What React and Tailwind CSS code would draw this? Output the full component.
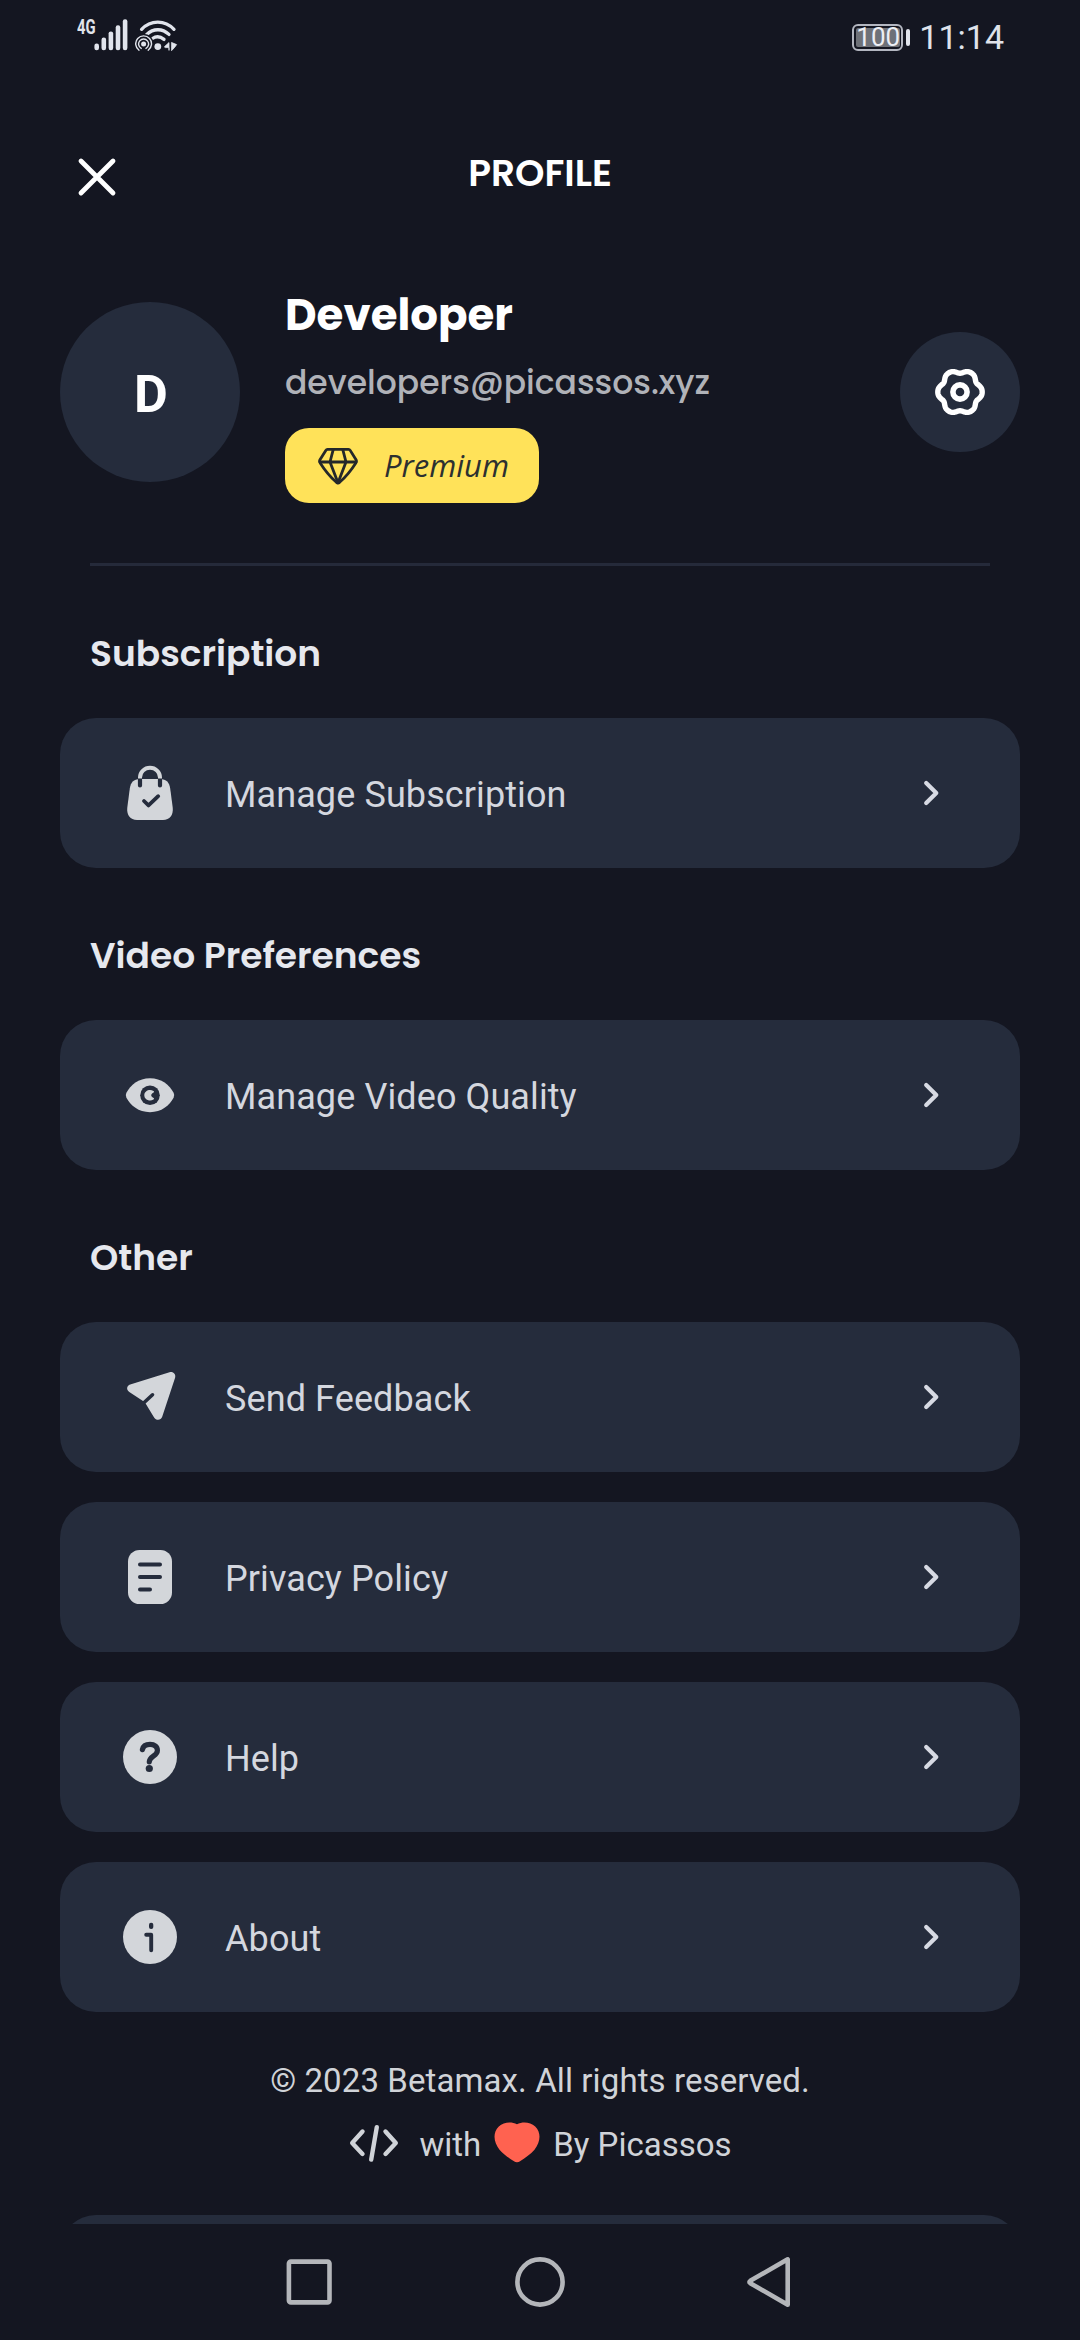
const CARD = "#252c3c";
const LIGHT = "#d3d6da";

function SignalIcon() {
  return (
    <svg width="36" height="36" viewBox="0 0 36 36" fill="#e1e4ec">
      <rect x="0.4" y="25.6" width="4.6" height="6.6" rx="2.2" />
      <rect x="7.5" y="19.6" width="4.6" height="12.6" rx="2.2" />
      <rect x="14.6" y="13.4" width="4.6" height="18.8" rx="2.2" />
      <rect x="21.7" y="7.2" width="4.6" height="25" rx="2.2" />
      <rect x="28.8" y="1.2" width="4.6" height="31" rx="2.2" />
    </svg>
  );
}

function WifiIcon() {
  return (
    <svg width="44" height="36" viewBox="0 0 44 36" fill="none" stroke="#e1e4ec" strokeLinecap="round">
      <path d="M6.6 11.3C15.5 1.6 30 1.6 39 11.3" strokeWidth="3.3" />
      <path d="M11.5 16.6C18.5 10 27.5 10.3 34 16.4" strokeWidth="3.3" />
      <path d="M17.5 20.5C21.5 17.8 25.5 18.6 29 21.4" strokeWidth="3.3" />
      <circle cx="22.8" cy="28.6" r="3.4" fill="#e1e4ec" stroke="none" />
      <circle cx="8.6" cy="26" r="10.2" fill="#141621" stroke="none" />
      <circle cx="8.6" cy="26" r="2.5" fill="#e1e4ec" stroke="none" />
      <path d="M6.2 30.4a5 5 0 1 1 4.8 0M4 32.2a7.9 7.9 0 1 1 9.2 0" strokeWidth="1.4" />
      <path d="M29.6 28.6L34 24.6V32.4V29.6H30.5ZM36.8 24.6L41.6 26.6L39.6 29.4L36.8 32.4Z" fill="#e1e4ec" strokeWidth="0.8" />
    </svg>
  );
}

function BatteryIcon() {
  return (
    <div className="flex items-center gap-[3px]">
      <div className="flex h-[27px] w-[51px] rounded-[6px] border-2 border-[#b3b6c0] p-[2px]">
        <div className="flex flex-1 items-center justify-center rounded-[2px] bg-[#6e7178] text-[26px] leading-none text-[#eceef4]">
          100
        </div>
      </div>
      <div className="h-[17px] w-[4px] rounded-[2px] bg-[#e1e4ec]" />
    </div>
  );
}

function CloseIcon() {
  return (
    <svg width="44" height="44" viewBox="0 0 44 44" fill="none" stroke="#fff" strokeWidth="4.8" strokeLinecap="round">
      <path d="M6 6L38 38M38 6L6 38" />
    </svg>
  );
}

// Closed outline whose radius swells six times round the circle.
const gearPath =
  Array.from({ length: 120 }, (_, i) => {
    const a = (i / 120) * Math.PI * 2;
    const c = Math.cos(6 * a);
    const r = 20.7 + 1.75 * c - 0.25 * Math.cos(12 * a);
    return `${i ? "L" : "M"}${(30 + r * Math.cos(a)).toFixed(2)} ${(30 + r * Math.sin(a)).toFixed(2)}`;
  }).join("") + "Z";

function GearIcon() {
  return (
    <svg width="60" height="60" viewBox="0 0 60 60" fill="none" stroke="#fff" strokeLinejoin="round">
      <path d={gearPath} strokeWidth="5.4" />
      <circle cx="30" cy="30" r="7.1" strokeWidth="5.6" />
    </svg>
  );
}

function DiamondIcon() {
  return (
    <svg width="44" height="40" viewBox="0 0 44 40" fill="none" stroke="#24282a" strokeWidth="2.8" strokeLinejoin="round" strokeLinecap="round">
      <path d="M11.5 3.4H32.5Q33.6 3.4 34.2 4.4L40.2 14Q41 15.4 40 16.7Q32.5 28.5 23.6 36.3Q22 37.6 20.4 36.3Q11.5 28.5 4 16.7Q3 15.4 3.8 14L9.8 4.4Q10.4 3.4 11.5 3.4Z" />
      <path d="M3.8 16H40.2M17.2 3.6L14 16L22 36.8L30 16L26.8 3.6" />
    </svg>
  );
}

function BagIcon() {
  return (
    <svg width="60" height="60" viewBox="0 0 60 60" fill="none" strokeLinecap="round">
      <path d="M20 16H40C46.500 16 49.400 19.600 50.200 25.500L52.700 44.500C53.600 52 49.800 57 43 57H17C10.200 57 6.400 52 7.300 44.500L9.800 25.500C10.600 19.600 13.500 16 20 16Z" fill={LIGHT} />
      <path d="M20 16.500V22.500M40 16.500V22.500" stroke={CARD} strokeWidth="4.200" />
      <path d="M20 15.500V14.500A10 9.700 0 0 1 40 14.500V15.500" stroke={LIGHT} strokeWidth="4" strokeLinecap="butt" />
      <path d="M24 38L28.500 42.400L38.200 33.200" stroke={CARD} strokeWidth="3.800" strokeLinejoin="round" />
    </svg>
  );
}

function EyeIcon() {
  return (
    <svg width="60" height="60" viewBox="0 0 60 60">
      <path d="M30 13.300C41.500 13.300 49.500 20 53.600 27.800Q54.900 30.300 53.600 32.800C49.500 40.500 41.500 47.200 30 47.200C18.500 47.200 10.500 40.500 6.400 32.800Q5.100 30.300 6.400 27.800C10.500 20 18.500 13.300 30 13.300Z" fill={LIGHT} />
      <circle cx="30" cy="30.300" r="9.800" fill={CARD} />
      <path d="M33.500 26C29.500 23.700 24.300 26 24.300 30.300C24.300 34.600 29.500 37 33.500 34.600C34.800 33.700 33.600 32.700 32.400 32.300C30.800 31.400 30.800 29.200 32.400 28.300C33.600 27.700 34.800 26.800 33.500 26Z" fill={LIGHT} />
    </svg>
  );
}

function SendIcon() {
  return (
    <svg width="60" height="60" viewBox="0 1.500 60 60" fill="none">
      <path d="M49.500 6.700C53 5.700 56.200 8.600 55.100 12.200L42.200 51.300C41 55 36.200 55.400 34.100 52L25.900 38.400Q24.700 36.400 23 35.500L9.300 26.400C6.100 24.200 6.500 20.200 10.200 18.900Z" fill={LIGHT} />
      <path d="M22.500 38.500L32.500 29.300" stroke={CARD} strokeWidth="3.600" strokeLinecap="round" />
    </svg>
  );
}

function DocumentIcon() {
  return (
    <svg width="60" height="60" viewBox="0 0 60 60" fill="none">
      <rect x="8" y="3" width="44" height="54" rx="11.500" fill={LIGHT} />
      <path d="M20 17.400H40M20 30H40M20 42.500H30" stroke={CARD} strokeWidth="4" strokeLinecap="round" />
    </svg>
  );
}

function HelpIcon() {
  return (
    <svg width="60" height="60" viewBox="0 0 60 60" fill="none">
      <circle cx="30" cy="30" r="27" fill={LIGHT} />
      <path d="M22.400 22.600C23.200 18.800 26 17.400 30 17.400C34.600 17.400 37.400 19.700 37.400 23.500C37.400 29 29.400 29.400 29.300 34.800" stroke={CARD} strokeWidth="5.200" strokeLinecap="round" />
      <circle cx="29.300" cy="41.500" r="3.600" fill={CARD} />
    </svg>
  );
}

function InfoIcon() {
  return (
    <svg width="60" height="60" viewBox="0 0 60 60" fill="none">
      <circle cx="30" cy="30" r="27" fill={LIGHT} />
      <rect x="29" y="15.800" width="4.300" height="6.200" rx="2" fill={CARD} />
      <path d="M26.200 27.700H31.200V43.200" stroke={CARD} strokeWidth="3.900" strokeLinecap="round" strokeLinejoin="round" />
    </svg>
  );
}

function ChevronIcon() {
  return (
    <svg width="36" height="36" viewBox="0 0 36 36" fill="none" stroke="#d7dae3" strokeWidth="4.200" strokeLinecap="round" strokeLinejoin="round">
      <path d="M13.200 8L23.300 18L13.200 28" />
    </svg>
  );
}

function CodeIcon() {
  return (
    <svg width="52" height="44" viewBox="0 0 52 44" fill="none" stroke="#d0d3d8" strokeWidth="4.400" strokeLinecap="round" strokeLinejoin="round">
      <path d="M14.500 8.500L4.200 20L14.500 31M37.500 8.500L47.800 20L37.500 31M28.800 4.200L23.200 36.600" />
    </svg>
  );
}

function HeartIcon() {
  return (
    <svg width="46" height="41" viewBox="0 0 46 46" preserveAspectRatio="none" fill="#ff6250">
      <path d="M23 2.600C28.500 -0.500 36.300 0 41.200 5C47.500 12 46.500 23 40.500 31C36.500 36 31.500 40 26.400 43.800Q23 46.500 19.600 43.800C14.500 40 9.500 36 5.500 31C-0.500 23 -1.500 12 4.800 5C9.700 0 17.500 -0.500 23 2.600Z" />
    </svg>
  );
}

function Row({ icon, label }) {
  return (
    <button className="flex h-[150px] w-full shrink-0 items-center rounded-[36px] bg-[#252c3c] pr-[71px] pl-[60px] text-left">
      {icon}
      <span className="ml-[45px] flex-1 pt-[3px] text-[36px] leading-[44px] tracking-[0.1px] text-[#d4d7df]">{label}</span>
      <ChevronIcon />
    </button>
  );
}

function Section({ title, rows }) {
  return (
    <section className="flex shrink-0 flex-col">
      <h2 className="h-[152px] px-[30px] pt-[61px] font-['Poppins','Inter',sans-serif] text-[36px] leading-[54px] font-semibold text-[#e6e8ee]">
        {title}
      </h2>
      <div className="flex flex-col gap-[30px]">
        {rows.map(([label, icon]) => (
          <Row key={label} label={label} icon={icon} />
        ))}
      </div>
    </section>
  );
}

export default function App() {
  return (
    <div className="flex h-[2340px] w-[1080px] flex-col overflow-hidden bg-[#141621] font-['Roboto',sans-serif]">
      <div className="flex h-[72px] shrink-0 items-center justify-between pr-[76px] pl-[77px]">
        <div className="flex items-center">
          <span className="flex h-[36px] w-[17px] items-start">
            <span className="-mt-[2px] origin-left scale-x-[0.74] text-[20px] leading-[22px] font-bold text-[#e1e4ec]">4G</span>
          </span>
          <SignalIcon />
          <span className="ml-[5px] flex"><WifiIcon /></span>
        </div>
        <div className="flex items-center pt-[2px]">
          <BatteryIcon />
          <span className="ml-[9px] text-[34px] leading-[40px] text-[#dfe2ea]">11:14</span>
        </div>
      </div>

      <header className="mt-[48px] grid h-[106px] shrink-0 grid-cols-[1fr_auto_1fr] items-center px-[75px]">
        <button className="flex pt-[8px]"><CloseIcon /></button>
        <h1 className="font-['Poppins','Inter',sans-serif] text-[37.5px] leading-[54px] font-semibold text-white">PROFILE</h1>
      </header>

      <main className="flex h-[1998px] shrink-0 flex-col overflow-hidden px-[60px] pt-[63px]">
        <div className="flex h-[214px] shrink-0 items-start">
          <div className="mt-[13px] flex size-[180px] items-center justify-center rounded-full bg-[#252c3c] pt-[5px] pl-[2px] text-[52px] leading-[60px] font-bold text-white">
            D
          </div>
          <div className="ml-[45px] flex flex-1 flex-col items-start font-['Poppins','Inter',sans-serif]">
            <div className="text-[43.5px] leading-[52px] font-bold text-white">Developer</div>
            <div className="mt-[19px] text-[33px] leading-[46px] font-medium text-[#b0b2b8]">developers@picassos.xyz</div>
            <div className="mt-[22px] flex h-[75px] w-[254px] items-center rounded-[24px] bg-[#ffe259] pl-[31px]">
              <DiamondIcon />
              <span className="ml-[24px] pb-[2px] font-['Open_Sans','Noto_Sans',sans-serif] text-[31px] leading-[42px] text-[#2c3030] italic">Premium</span>
            </div>
          </div>
          <button className="mt-[43px] flex size-[120px] items-center justify-center rounded-full bg-[#252c3c]">
            <GearIcon />
          </button>
        </div>

        <div className="mx-[30px] mt-[60px] h-[3px] shrink-0 bg-[#252a3a]" />

        <Section title="Subscription" rows={[["Manage Subscription", <BagIcon />]]} />
        <Section title="Video Preferences" rows={[["Manage Video Quality", <EyeIcon />]]} />
        <Section
          title="Other"
          rows={[
            ["Send Feedback", <SendIcon />],
            ["Privacy Policy", <DocumentIcon />],
            ["Help", <HelpIcon />],
            ["About", <InfoIcon />],
          ]}
        />

        <footer className="mt-[47px] flex shrink-0 flex-col items-center text-[33px] leading-[44px] text-[#d0d3d8]">
          <p className="tracking-[0.1px]">© 2023 Betamax. All rights reserved.</p>
          <div className="mt-[19px] flex h-[45px] items-center">
            <CodeIcon />
            <span className="ml-[19px]">with</span>
            <span className="mr-[13px] ml-[13px] flex pb-[4px]"><HeartIcon /></span>
            <span>By Picassos</span>
          </div>
        </footer>

        <div className="mt-[48px] h-[150px] shrink-0 rounded-[36px] bg-[#252c3c]" />
      </main>

      <nav className="flex h-[116px] shrink-0 items-center justify-center gap-[170px]">
        <svg width="60" height="60" viewBox="0 0 60 60" fill="none" stroke="#b4b6ba" strokeWidth="4.600">
          <rect x="8.900" y="9.600" width="40.600" height="40.800" rx="2" />
        </svg>
        <svg width="60" height="60" viewBox="0 0 60 60" fill="none" stroke="#b4b6ba" strokeWidth="4.600">
          <circle cx="30" cy="30" r="22.600" />
        </svg>
        <svg width="60" height="60" viewBox="0 0 60 60" fill="none" stroke="#b4b6ba" strokeWidth="4.600" strokeLinejoin="round">
          <path d="M10.300 28.800L47.700 7.300V52.700L10.300 31.200Q8.500 30 10.300 28.800Z" />
        </svg>
      </nav>
    </div>
  );
}
